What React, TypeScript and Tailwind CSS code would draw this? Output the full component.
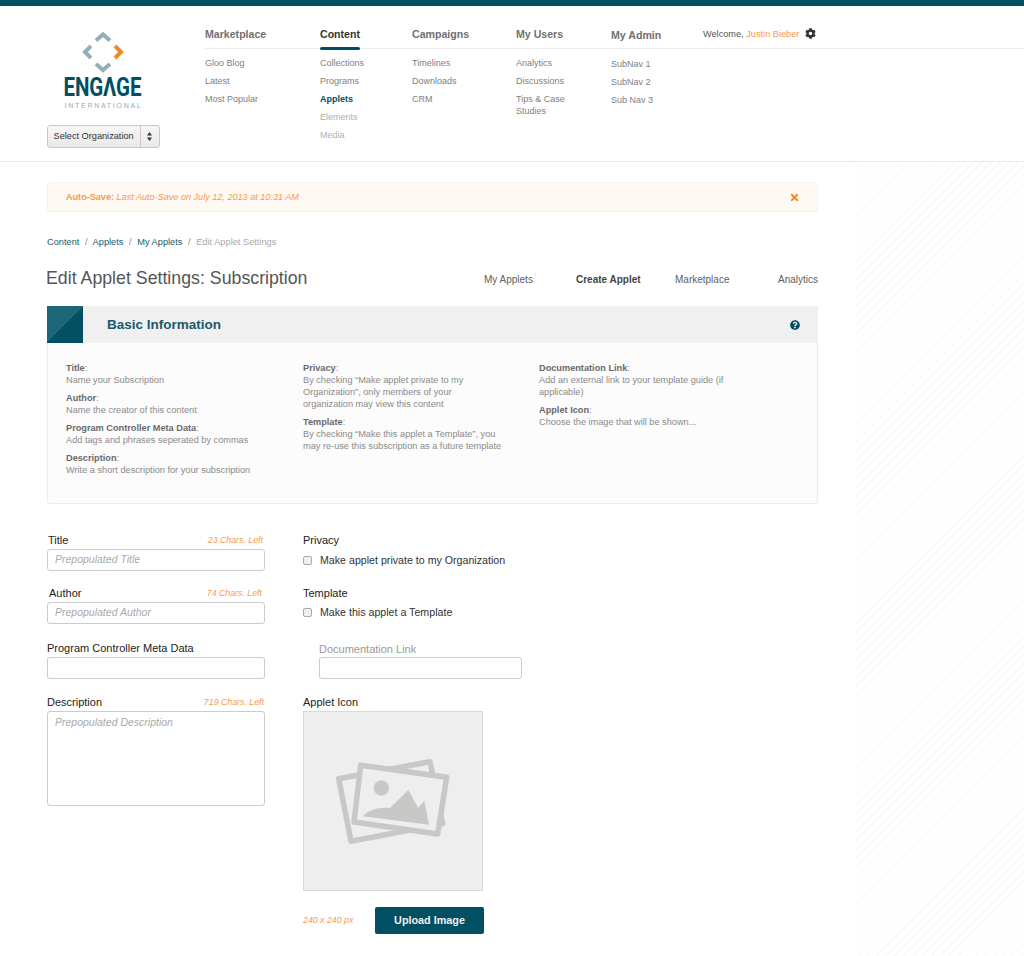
import React from "react";
import { FaCog, FaTimes, FaQuestionCircle } from "react-icons/fa";

const NAV = [
  { t: "Marketplace", w: "w-[115px]", items: ["Gloo Blog", "Latest", "Most Popular"] },
  { t: "Content", w: "w-[92px]", items: ["Collections", "Programs", "Applets", "Elements", "Media"], active: true },
  { t: "Campaigns", w: "w-[104px]", items: ["Timelines", "Downloads", "CRM"] },
  { t: "My Users", w: "w-[95px]", items: ["Analytics", "Discussions", "Tips & Case Studies"] },
  { t: "My Admin", w: "w-[92px]", items: ["SubNav 1", "SubNav 2", "Sub Nav 3"], low: true },
];

function Logo() {
  return (
    <div className="flex flex-col items-center">
      <svg width="44" height="42" viewBox="0 0 44 42" className="mt-[25px]">
        <path d="M15 9.5 L22 3.5 L29 9.5" fill="none" stroke="#95aeb9" strokeWidth="4" />
        <path d="M10 15 L4 21 L10 27" fill="none" stroke="#95aeb9" strokeWidth="4" />
        <path d="M34 15 L40 21 L34 27" fill="none" stroke="#f08a24" strokeWidth="4" />
        <path d="M15 33 L22 39 L29 33" fill="none" stroke="#95aeb9" strokeWidth="4" />
      </svg>
      <div className="mt-[3px] h-[24px] font-['Roboto',sans-serif] font-bold text-[25px] leading-[24px] text-[#004f63] tracking-[-0.2px] scale-x-[0.82]">
        ENGΛGE
      </div>
      <div className="mt-[1px] h-[9px] font-['Liberation_Sans',sans-serif] text-[7px] leading-[9px] text-[#92abb7] tracking-[1.72px] pl-[2px]">
        INTERNATIONAL
      </div>
      <div className="ml-[1px] mt-[15px] flex h-[23px] w-[113px] items-stretch rounded-[3px] border border-[#c8c8c8] bg-gradient-to-b from-[#f7f7f7] to-[#e9e9e9] text-[9.2px] text-[#333]">
        <span className="flex-1 pl-[6px] leading-[20px] whitespace-nowrap">Select Organization</span>
        <span className="flex w-[19px] flex-col items-center justify-center border-l border-[#c8c8c8]">
          <svg width="5" height="9" viewBox="0 0 5 9">
            <path d="M2.5 0 L5 3.5 H0 Z M2.5 9 L5 5.5 H0 Z" fill="#333" />
          </svg>
        </span>
      </div>
    </div>
  );
}

function Header() {
  return (
    <header className="flex h-[156px] border-b border-[#e8e8e8]">
      <div className="w-[205px] shrink-0">
        <Logo />
      </div>
      <div className="flex-1">
        <div className="flex h-[43px] border-b border-[#eeeeee]">
          {NAV.map((n) => (
            <div
              key={n.t}
              className={`${n.w} relative ${n.low ? "pt-[22px]" : "pt-[21px]"} text-[10.6px] leading-[14px] font-bold ${n.active ? "text-[#333]" : "text-[#707070]"}`}
            >
              {n.t}
              {n.active && <span className="absolute left-0 top-[41px] h-[3px] w-[40px] rounded-[2px] bg-[#004f63]" />}
            </div>
          ))}
          <div className="flex items-start pt-[21px] text-[9.2px] leading-[14px] text-[#555] whitespace-nowrap">
            <span>Welcome,&nbsp;</span>
            <span className="text-[#f79a4e]">Justin Bieber</span>
            <FaCog className="ml-[6px] mt-[1px] text-[#333]" size={11} />
          </div>
        </div>
        <div className="flex pt-[8px]">
          {NAV.map((n) => (
            <ul
              key={n.t}
              className={`${n.w} ${n.low ? "pt-[1px]" : ""} flex flex-col gap-[6px] pr-[30px] text-[9px] leading-[12px] text-[#808080]`}
            >
              {n.items.map((i) => (
                <li
                  key={i}
                  className={
                    i === "Applets"
                      ? "font-bold text-[#004f63]"
                      : i === "Elements" || i === "Media"
                      ? "text-[#b0b0b0]"
                      : ""
                  }
                >
                  {i}
                </li>
              ))}
            </ul>
          ))}
        </div>
      </div>
    </header>
  );
}

function Help({ items }: { items: [string, string][] }) {
  return (
    <div className="flex flex-col gap-[6px]">
      {items.map(([t, d]) => (
        <div key={t} className="text-[9.2px] leading-[12px] text-[#8a8a8a]">
          <div>
            <span className="font-bold text-[#6a6a6a]">{t}</span>:
          </div>
          <div>{d}</div>
        </div>
      ))}
    </div>
  );
}

function Label({ t, note, cls }: { t: string; note?: string; cls?: string }) {
  return (
    <div className={`flex h-[14px] items-center justify-between text-[11px] leading-[14px] text-[#222] ${cls ?? ""}`}>
      <span>{t}</span>
      {note && <span className="text-[8.8px] italic text-[#f79a4e]">{note}</span>}
    </div>
  );
}

const inputCls =
  "block w-full h-[22px] mt-[2px] rounded-[3px] border border-[#cccccc] bg-white px-[7px] pb-[2px] text-[10.5px] italic outline-none placeholder:text-[#aaaaaa] placeholder:italic";

function Check({ t }: { t: string }) {
  return (
    <label className="flex h-[14px] items-center text-[10.65px] leading-[14px] text-[#333]">
      <input type="checkbox" className="h-[9px] w-[9px] appearance-none rounded-[2px] border border-[#aaaaaa] bg-[#f0f0f0]" />
      <span className="ml-[8px]">{t}</span>
    </label>
  );
}

function Photos() {
  return (
    <svg width="114" height="87" viewBox="0 0 114 87" fill="none">
      <g stroke="#c8c8c6" strokeWidth="5.5" strokeLinejoin="round">
        <path d="M2.7 20.7 L94 3.7 L106.7 65.7 L15 83.3 Z" />
        <path d="M24.7 7.3 L110.7 19.3 L101.7 76 L18 64 Z" fill="#eeeeee" />
      </g>
      <circle cx="45.3" cy="30" r="7.7" fill="#c8c8c6" />
      <path d="M26.7 58.3 C32 52 44 48.5 54 50 L72.3 32 L82.3 50 L88.3 42.7 L93 66.7 Z" fill="#c8c8c6" />
    </svg>
  );
}

export default function App() {
  return (
    <div className="w-[1024px] font-['Liberation_Sans',Arial,sans-serif] bg-white">
      <div className="h-[6px] bg-[#004f63]" />
      <Header />
      <div className="flex">
        <main className="w-[855px] shrink-0 pl-[47px] pr-[37px] pt-[20px] pb-[22px]">
          <div className="flex h-[30px] items-center justify-between rounded-[3px] border border-[#f8f2ec] bg-[#fff9f4] pl-[18px] pr-[17px] pt-[1px] text-[9.1px] text-[#f79a4e]">
            <div>
              <span className="font-bold">Auto-Save:</span> <span className="italic">Last Auto-Save on July 12, 2013 at 10:31 AM</span>
            </div>
            <FaTimes className="text-[#f08a24]" size={11} />
          </div>

          <div className="mt-[24px] h-[12px] text-[9.25px] leading-[12px] text-[#1d5a6b] whitespace-nowrap">
            Content <span className="mx-[3px] text-[#888]">/</span> Applets <span className="mx-[3px] text-[#888]">/</span> My Applets{" "}
            <span className="mx-[3px] text-[#888]">/</span> <span className="text-[#aaa]">Edit Applet Settings</span>
          </div>

          <div className="mt-[17px] flex h-[26px] items-center">
            <h1 className="-ml-[1px] flex-1 text-[17.75px] leading-[26px] text-[#555]">Edit Applet Settings: Subscription</h1>
            <nav className="flex pt-[3px] text-[10px] text-[#606060] whitespace-nowrap">
              <span className="w-[92px]">My Applets</span>
              <span className="w-[99px] font-bold text-[#444]">Create Applet</span>
              <span className="w-[103px]">Marketplace</span>
              <span>Analytics</span>
            </nav>
          </div>

          <section className="mt-[15px]">
            <div className="flex h-[37px] items-center bg-[#f0f0f0]">
              <div className="h-[37px] w-[36px] bg-[linear-gradient(135deg,#1d6778_50%,#004f63_50%)]" />
              <h2 className="ml-[24px] flex-1 pt-[2px] text-[13.5px] font-bold text-[#1a5a6c]">Basic Information</h2>
              <FaQuestionCircle className="mr-[18px] text-[#004f63]" size={10} />
            </div>
            <div className="flex h-[161px] rounded-b-[3px] border border-t-0 border-[#ececec] bg-[#fcfcfc] pl-[18px] pt-[19px]">
              <div className="w-[237px] shrink-0">
                <Help
                  items={[
                    ["Title", "Name your Subscription"],
                    ["Author", "Name the creator of this content"],
                    ["Program Controller Meta Data", "Add tags and phrases seperated by commas"],
                    ["Description", "Write a short description for your subscription"],
                  ]}
                />
              </div>
              <div className="w-[236px] shrink-0 pr-[37px]">
                <Help
                  items={[
                    ["Privacy", "By checking “Make applet private to my Organization”, only members of your organization may view this content"],
                    ["Template", "By checking “Make this applet a Template”, you may re-use this subscription as a future template"],
                  ]}
                />
              </div>
              <div className="flex-1 pr-[60px]">
                <Help
                  items={[
                    ["Documentation Link", "Add an external link to your template guide (if applicable)"],
                    ["Applet Icon", "Choose the image that will be shown..."],
                  ]}
                />
              </div>
            </div>
          </section>

          <div className="mt-[29px] flex">
            <div className="w-[218px] shrink-0">
              <Label t="Title" note="23 Chars. Left" cls="pl-[1px] pr-[2px]" />
              <input className={inputCls} placeholder="Prepopulated Title" />
              <Label t="Author" note="74 Chars. Left" cls="mt-[15px] pl-[2px] pr-[3px]" />
              <input className={inputCls} placeholder="Prepopulated Author" />
              <Label t="Program Controller Meta Data" cls="mt-[17px]" />
              <input className={inputCls} />
              <Label t="Description" note="719 Chars. Left" cls="mt-[16px] pr-[1px]" />
              <textarea
                className="mt-[2px] block h-[95px] w-full resize-none rounded-[3px] border border-[#cccccc] bg-white px-[7px] py-[3px] text-[10.5px] italic outline-none placeholder:text-[#aaaaaa] placeholder:italic"
                placeholder="Prepopulated Description"
              />
            </div>
            <div className="ml-[38px] flex-1">
              <Label t="Privacy" />
              <div className="mt-[6px]">
                <Check t="Make applet private to my Organization" />
              </div>
              <Label t="Template" cls="mt-[19px]" />
              <div className="mt-[5px]">
                <Check t="Make this applet a Template" />
              </div>
              <div className="ml-[16px] mt-[23px] w-[203px]">
                <div className="h-[14px] text-[11px] leading-[14px] text-[#999]">Documentation Link</div>
                <input className="mt-[1px] block h-[22px] w-full rounded-[3px] border border-[#cccccc] bg-white outline-none" />
              </div>
              <Label t="Applet Icon" cls="mt-[16px]" />
              <div className="mt-[2px] flex h-[180px] w-[180px] items-center justify-center border border-[#d9d9d9] bg-[#eeeeee]">
                <Photos />
              </div>
              <div className="mt-[16px] flex h-[27px] w-[181px] items-center justify-between">
                <span className="text-[8.8px] italic text-[#f79a4e]">240 x 240 px</span>
                <button className="h-[27px] w-[109px] rounded-[2px] bg-[#004f63] text-[10.8px] font-bold text-[#f0f0f0]">Upload Image</button>
              </div>
            </div>
          </div>
        </main>
        <aside className="flex-1 bg-[repeating-linear-gradient(135deg,#f8f8f8_0,#f8f8f8_1px,#ffffff_1px,#ffffff_6.4px)]" />
      </div>
    </div>
  );
}
